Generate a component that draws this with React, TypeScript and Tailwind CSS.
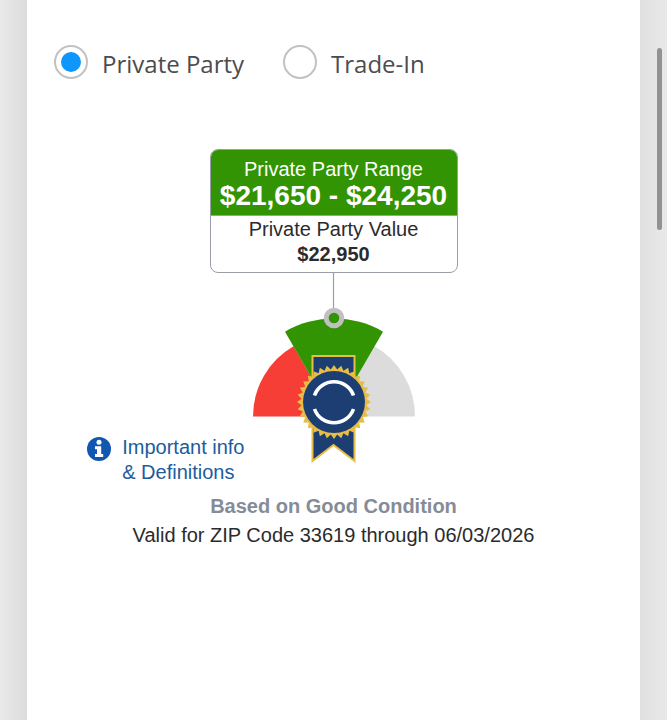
import { useState } from 'react';

const TEETH = 32;

// zigzag outline of the medal
const sealPoints = Array.from({ length: TEETH * 2 }, (_, i) => {
  const r = i % 2 === 0 ? 37 : 32.6;
  const a = (Math.PI * i) / TEETH;
  return `${(82 + r * Math.sin(a)).toFixed(2)},${(129 - r * Math.cos(a)).toFixed(2)}`;
}).join(' ');

function Gauge() {
  return (
    <svg viewBox="0 0 164 212" className="w-[164px] h-[212px]" role="img" aria-label="Price gauge">
      <path d="M82 143.5H1A81 81 0 0 1 41.5 73.35Z" fill="#f63d36" />
      <path d="M82 143.5H163A81 81 0 0 0 122.5 73.35Z" fill="#dcdcdc" />
      <path d="M82 143.5L33 58.63A98 98 0 0 1 131 58.63Z" fill="#339403" />
      <path d="M81.5 0V40" stroke="#9a9ea8" strokeWidth="1.2" />
      <circle cx="82" cy="45" r="7.8" fill="#339403" stroke="#bfc0bf" strokeWidth="5" />
      <path
        d="M60.5 83H102.5V188L81.5 172L60.5 188Z"
        fill="#1c3e72"
        stroke="#e7bd45"
        strokeWidth="2"
      />
      <polygon points={sealPoints} fill="#e7bd45" />
      <circle cx="82" cy="129" r="31" fill="#1c3e72" />
      <path
        d="M62.5 122.5A20.7 20.7 0 0 1 101.5 122.5M62.5 136A20.7 20.7 0 0 0 101.5 136"
        fill="none"
        stroke="#fff"
        strokeWidth="3.6"
      />
    </svg>
  );
}

function InfoIcon() {
  return (
    <svg viewBox="0 0 24 24" className="mt-0.5 size-6 shrink-0" aria-hidden="true">
      <circle cx="12" cy="12" r="12" fill="#0f57b0" />
      <circle cx="12" cy="5.3" r="2.5" fill="#fff" />
      <path d="M8 9.2H14.2V17H16.2V20H8V17H10V12.2H8Z" fill="#fff" />
    </svg>
  );
}

export default function App() {
  const [type, setType] = useState('private');

  const radioClass =
    'appearance-none shrink-0 size-[34px] rounded-full border-2 border-[#c2c2c2] p-[5px] bg-clip-content checked:bg-[#0d96fb]';
  const labelClass = "pt-1 text-2xl leading-8 text-[#4c4c50] font-['Open_Sans',sans-serif]";

  return (
    <div className="flex min-h-screen bg-white font-['Liberation_Sans',Arial,sans-serif] text-[#2b2b2d]">
      <div className="w-[27px] shrink-0 bg-linear-to-r from-[#e9e9e9] to-[#dcdcdc]" />

      <main className="flex-1 min-w-0 pt-11">
        <div className="flex items-center pl-[27px]">
          <input
            id="private"
            type="radio"
            name="type"
            className={radioClass}
            checked={type === 'private'}
            onChange={() => setType('private')}
          />
          <label htmlFor="private" className={`${labelClass} pl-3.5 pr-[39px]`}>
            Private Party
          </label>
          <input
            id="trade"
            type="radio"
            name="type"
            className={radioClass}
            checked={type === 'trade'}
            onChange={() => setType('trade')}
          />
          <label htmlFor="trade" className={`${labelClass} pl-3.5`}>
            Trade-In
          </label>
        </div>

        <section className="mt-[69px] text-center text-xl leading-6">
          <div className="mx-auto w-[248px] rounded-lg border border-[#9a9ea8] overflow-hidden">
            <div className="bg-[#339403] text-white border-b border-[#9a9ea8] pt-[7px] pb-[5px]">
              <p>Private Party Range</p>
              <p className="text-[28px] leading-[29px] font-bold">$21,650 - $24,250</p>
            </div>
            <div className="pt-px pb-[5px]">
              <p>Private Party Value</p>
              <p className="font-bold leading-[26px]">$22,950</p>
            </div>
          </div>

          <div className="grid grid-cols-[1fr_auto_1fr] items-end">
            <a
              href="#definitions"
              className="justify-self-end flex items-start gap-[11px] pr-[7px] text-left leading-[25px] text-[#1c5c9c]"
            >
              <InfoIcon />
              <span>
                Important info
                <br />
                &amp; Definitions
              </span>
            </a>
            <Gauge />
          </div>

          <p className="mt-[9px] font-bold text-[#858c98]">Based on Good Condition</p>
          <p className="mt-[5px]">Valid for ZIP Code 33619 through 06/03/2026</p>
        </section>
      </main>

      <div className="w-[27px] shrink-0 bg-linear-to-r from-[#e0e0e0] to-[#e9e9e9]">
        <div className="mt-12 ml-[17px] w-[5px] h-[182px] rounded-full bg-[#929292]" />
      </div>
    </div>
  );
}
